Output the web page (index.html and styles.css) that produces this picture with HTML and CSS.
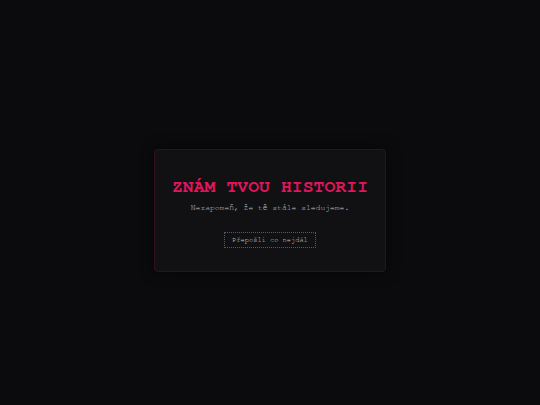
FILE: index.html
```html
<!DOCTYPE html>
<html lang="cs">
<head>
<meta charset="utf-8">
<title>Znám tvou historii</title>
<link rel="stylesheet" href="styles.css">
</head>
<body>
<main class="stage">
  <section class="card">
    <h1 class="title">ZNÁM TVOU HISTORII</h1>
    <p class="subtitle">Nezapomeň, že tě stále sledujeme.</p>
    <button class="btn" type="button">Přepošli co nejdál</button>
  </section>
</main>
</body>
</html>
```

FILE: styles.css
```css
html, body {
  margin: 0;
  padding: 0;
  background: #0b0b0d;
  height: 100%;
}
.stage {
  box-sizing: border-box;
  min-height: 100vh;
  padding-top: 16px;
  display: flex;
  align-items: center;
  justify-content: center;
  font-family: FreeMono, "Liberation Mono", monospace;
}
.card {
  box-sizing: border-box;
  width: 232px;
  padding: 27px 10px 23px;
  background: #111114;
  border: 1px solid #34101f;
  border-radius: 4px;
  box-shadow: 0 0 14px rgba(0, 0, 0, 0.6);
  display: flex;
  flex-direction: column;
  align-items: center;
}
.title {
  margin: 0;
  font-size: 18px;
  line-height: 20px;
  font-weight: bold;
  letter-spacing: 0.1px;
  color: #e3155d;
  white-space: nowrap;
}
.subtitle {
  margin: 5px 0 0;
  font-size: 8px;
  line-height: 12px;
  color: #c2c2c2;
  white-space: nowrap;
}
.btn {
  margin-top: 18px;
  box-sizing: border-box;
  height: 16px;
  padding: 0 7px;
  font-family: FreeMono, "Liberation Mono", monospace;
  font-size: 7px;
  line-height: 14px;
  color: #d0d0d0;
  background: transparent;
  border: 1px dotted #5a5a5a;
  border-radius: 1px;
  white-space: nowrap;
}
```
